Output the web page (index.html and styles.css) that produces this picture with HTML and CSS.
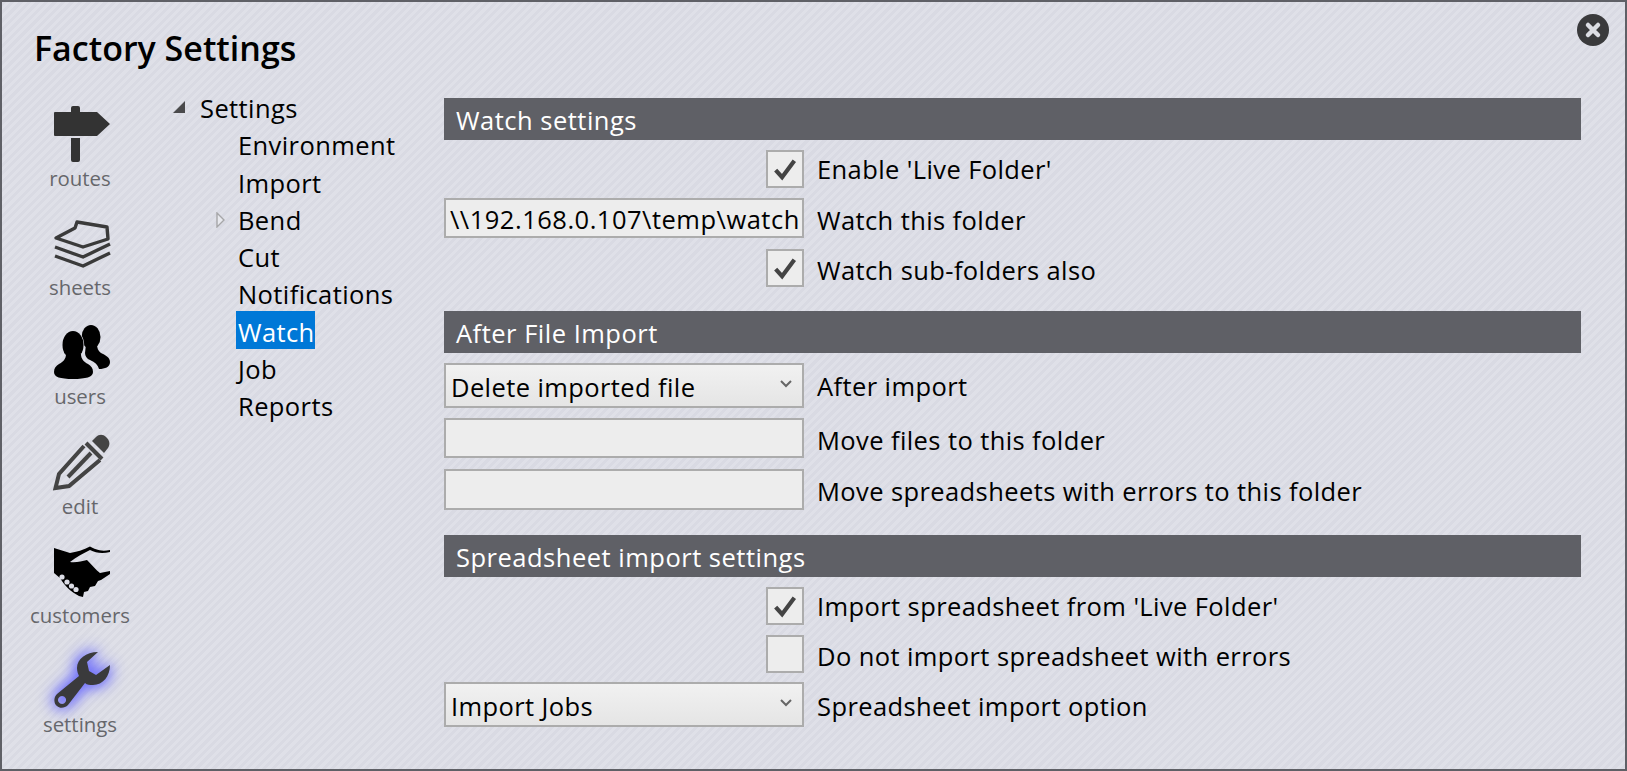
FILE: index.html
```html
<!DOCTYPE html>
<html lang="en">

<head>
    <meta charset="UTF-8">
    <title>Factory Settings</title>
    <link rel="stylesheet" href="styles.css">
</head>

<body>
    <div class="window">
        <button class="close-btn" aria-label="Close">
            <svg viewBox="0 0 32 32" width="32" height="32">
                <circle cx="16" cy="16" r="16" fill="#3a3a3c" />
                <path d="M11 11l10 10M21 11l-10 10" stroke="#dcdde3" stroke-width="4.5" stroke-linecap="round" />
            </svg>
        </button>

        <h1 class="title">Factory Settings</h1>

        <div class="content">
            <nav class="sidebar">
                <a class="nav-item">
                    <svg class="nav-icon" viewBox="0 0 56 56">
                        <path fill="#333" d="M17 2a2 2 0 0 1 2-2h5a2 2 0 0 1 2 2v4h17l13 12-13 12H1a1 1 0 0 1-1-1V7a1 1 0 0 1 1-1h16zM17 32h9v22a2 2 0 0 1-2 2h-5a2 2 0 0 1-2-2z" />
                    </svg>
                    <span class="nav-label">routes</span>
                </a>
                <a class="nav-item">
                    <svg class="nav-icon" viewBox="0 0 56 56">
                        <g fill="none" stroke="#3a3a3a" stroke-width="3.4" stroke-linejoin="round">
                            <path d="M23 7l-2 6L2 23l27 9 25-8-1-12z" />
                            <path d="M1 32l28 10 27-13" />
                            <path d="M1 41l28 10 27-13" />
                        </g>
                    </svg>
                    <span class="nav-label">sheets</span>
                </a>
                <a class="nav-item">
                    <svg class="nav-icon" viewBox="0 0 56 56">
                        <ellipse cx="37" cy="13" rx="9.500" ry="12" fill="#000" />
                        <path fill="#000" d="M32 20h11c0 4 1 7 4 9 4 2 9 4 9 9 0 5-5 7-11 7-1-4-4-7-9-9-3-1-5-4-5-7z" />
                        <g fill="#000" stroke="#dcdde6" stroke-width="1.400" paint-order="stroke">
                            <ellipse cx="19" cy="21" rx="10.500" ry="14" />
                            <path d="M12 30c0 5-3 8-7 10-3 2-5 4-5 8 0 5 6 7 19 7s20-2 20-7c0-4-2-6-5-8-4-2-7-5-7-10z" />
                        </g>
                        <ellipse cx="19" cy="24" rx="9.500" ry="11" fill="#000" />
                    </svg>
                    <span class="nav-label">users</span>
                </a>
                <a class="nav-item">
                    <svg class="nav-icon" viewBox="0 0 56 56">
                        <path fill="#444" d="M38 7l4-4c3-3 7-3 10 0l1 1c3 3 3 7 1 10l-4 5z" />
                        <path fill="none" stroke="#444" stroke-width="4" d="M32 9l16 16" />
                        <path fill="none" stroke="#444" stroke-width="4" d="M30 12L5 40 1.500 54 15 52l31-26" />
                        <path fill="none" stroke="#444" stroke-width="4" d="M14 43l23-24" />
                    </svg>
                    <span class="nav-label">edit</span>
                </a>
                <a class="nav-item">
                    <svg class="nav-icon" viewBox="0 0 56 56">
                        <path fill="#000" d="M0 5l16 5c6-1 14-3 20-6.500 5 2.500 10 5.500 20 3.500v2c-8 2-14 1-20-2-6 3-14 7-20 12 6 1 12-1 17-2 5 5 9 10 13 13l10-2v3l-9 6-3 1-3 5-5 1-2 4-4 1-1 5-4-1C17 49 10 42 6 35l-6-5z" />
                        <g fill="#dcdde6">
                            <circle cx="8" cy="34" r="2.600" />
                            <circle cx="13" cy="39" r="2.600" />
                            <circle cx="17.500" cy="43" r="2.600" />
                            <circle cx="22" cy="46.500" r="2.600" />
                        </g>
                    </svg>
                    <span class="nav-label">customers</span>
                </a>
                <a class="nav-item active">
                    <svg class="nav-icon" viewBox="0 0 56 56">
                        <path fill="#3a3a3c" fill-rule="evenodd" d="M44 0C32 0 23 7 23 16c0 3 1 6 2 8L3 42c-4 4-3 10 0 12 3 3 8 2 11-1l17-22c2 2 5 2 8 2 10 0 17-9 17-20L42 23l-7-4-2-9zM8 44a4 4 0 1 0 0.100 0z" />
                    </svg>
                    <span class="nav-label">settings</span>
                </a>
            </nav>

            <ul class="tree">
                <li class="tree-row root">
                    <span class="arrow-open"></span>Settings
                </li>
                <li class="tree-row">Environment</li>
                <li class="tree-row">Import</li>
                <li class="tree-row">
                    <svg class="arrow-closed" viewBox="0 0 9 16"><path d="M1 1l7 7-7 7z" /></svg>Bend
                </li>
                <li class="tree-row">Cut</li>
                <li class="tree-row">Notifications</li>
                <li class="tree-row"><span class="selected">Watch</span></li>
                <li class="tree-row">Job</li>
                <li class="tree-row">Reports</li>
            </ul>

            <main class="panel">
                <section class="group">
                    <h2 class="group-title">Watch settings</h2>
                    <div class="field">
                        <span class="checkbox"><svg viewBox="0 0 24 24"><path d="M4 13l5.500 6L20 5" /></svg></span>
                        <label>Enable 'Live Folder'</label>
                    </div>
                    <div class="field">
                        <input class="text-input" type="text" value="\\192.168.0.107\temp\watch">
                        <label class="label-low">Watch this folder</label>
                    </div>
                    <div class="field field-loose">
                        <span class="checkbox"><svg viewBox="0 0 24 24"><path d="M4 13l5.500 6L20 5" /></svg></span>
                        <label class="label-low">Watch sub-folders also</label>
                    </div>
                </section>

                <section class="group group-after">
                    <h2 class="group-title">After File Import</h2>
                    <div class="field">
                        <div class="select">Delete imported file<svg viewBox="0 0 12 8"><path d="M1 1l5 5 5-5" /></svg></div>
                        <label>After import</label>
                    </div>
                    <div class="field">
                        <input class="text-input" type="text">
                        <label class="label-low">Move files to this folder</label>
                    </div>
                    <div class="field field-loose">
                        <input class="text-input tall" type="text">
                        <label class="label-low">Move spreadsheets with errors to this folder</label>
                    </div>
                </section>

                <section class="group group-import">
                    <h2 class="group-title">Spreadsheet import settings</h2>
                    <div class="field">
                        <span class="checkbox"><svg viewBox="0 0 24 24"><path d="M4 13l5.500 6L20 5" /></svg></span>
                        <label>Import spreadsheet from 'Live Folder'</label>
                    </div>
                    <div class="field">
                        <span class="checkbox"></span>
                        <label class="label-low">Do not import spreadsheet with errors</label>
                    </div>
                    <div class="field field-tight">
                        <div class="select">Import Jobs<svg viewBox="0 0 12 8"><path d="M1 1l5 5 5-5" /></svg></div>
                        <label class="label-low">Spreadsheet import option</label>
                    </div>
                </section>
            </main>
        </div>
    </div>
</body>

</html>
```

FILE: styles.css
```css
html,
body {
    margin: 0;
    height: 100%;
}

body {
    font-family: 'Open Sans', 'Noto Sans', sans-serif;
    font-size: 25.5px;
    letter-spacing: 0.4px;
    color: #000;
}

.window {
    position: relative;
    box-sizing: border-box;
    width: 1627px;
    height: 771px;
    border: 2px solid #5f6066;
    background-color: #dcdde6;
    background-image: repeating-linear-gradient(135deg, #d9dae3 0, #d9dae3 3px, #dfe0e8 3px, #dfe0e8 6px);
    overflow: hidden;
}

.close-btn {
    position: absolute;
    top: 12px;
    right: 16px;
    width: 32px;
    height: 32px;
    padding: 0;
    border: none;
    background: none;
}

.title {
    margin: 0;
    padding: 24px 0 0 32px;
    font-size: 34px;
    line-height: 44px;
    font-weight: 600;
    letter-spacing: 0;
}

.content {
    display: flex;
    padding-top: 20px;
}

.sidebar {
    width: 156px;
    flex-shrink: 0;
    display: flex;
    flex-direction: column;
    padding-top: 16px;
    letter-spacing: 0;
}

.nav-item {
    height: 109.2px;
    display: flex;
    flex-direction: column;
    align-items: center;
}

.nav-icon {
    width: 56px;
    height: 56px;
    flex-shrink: 0;
    margin-left: 4px;
    overflow: visible;
}

.nav-label {
    margin-top: 1px;
    font-size: 20.4px;
    line-height: 30px;
    color: #66676b;
}

.active .nav-icon {
    filter: drop-shadow(0 0 7px #6c6cfa) drop-shadow(0 0 7px #8080f8);
}

.tree {
    width: 286px;
    flex-shrink: 0;
    margin: 0;
    padding: 0;
    list-style: none;
}

.tree-row {
    position: relative;
    height: 37.25px;
    line-height: 37px;
    padding-left: 80px;
    white-space: nowrap;
}

.tree-row.root {
    padding-left: 42px;
}

.arrow-open {
    position: absolute;
    left: 15px;
    top: 11px;
    width: 0;
    height: 0;
    border-left: 12px solid transparent;
    border-bottom: 12px solid #4a4a4c;
}

.arrow-closed {
    position: absolute;
    left: 58px;
    top: 10px;
    width: 9px;
    height: 16px;
    fill: #e8e9ee;
    stroke: #a6a6a8;
    stroke-width: 1.4;
}

.selected {
    display: inline-block;
    vertical-align: top;
    height: 38px;
    line-height: 43px;
    margin: -3px 0 0 -2px;
    padding: 0 0 0 2px;
    background-color: #0078d7;
    color: #fff;
}

.panel {
    width: 1137px;
    padding-top: 8px;
}

.group-title {
    margin: 0;
    height: 42px;
    line-height: 44px;
    padding-left: 12px;
    background-color: #5f6066;
    color: #fff;
    font-size: 25.5px;
    font-weight: 400;
    letter-spacing: 0.5px;
}

.group-after {
    margin-top: 24px;
}

.group-import {
    margin-top: 25px;
}

.field {
    display: grid;
    grid-template-columns: 360px 1fr;
    column-gap: 13px;
    align-items: center;
    margin-top: 10px;
}

.field-loose {
    margin-top: 11px;
}

.field-tight {
    margin-top: 9px;
}

.label-low {
    padding-top: 3px;
}

.checkbox {
    box-sizing: border-box;
    justify-self: end;
    width: 38px;
    height: 38px;
    border: 2px solid #acacac;
    background-color: #ededed;
    display: flex;
    align-items: center;
    justify-content: center;
}

.checkbox svg {
    width: 28px;
    height: 28px;
    fill: none;
    stroke: #444;
    stroke-width: 3.6;
}

.text-input {
    box-sizing: border-box;
    width: 360px;
    height: 40px;
    margin: 0;
    padding: 2px 4px 0;
    border: 2px solid #acacac;
    border-radius: 0;
    background-color: #ededed;
    font: inherit;
    letter-spacing: 0.5px;
    color: #000;
    outline: none;
}

.text-input.tall {
    height: 41px;
}

.select {
    box-sizing: border-box;
    height: 45px;
    line-height: 44px;
    padding: 0 5px;
    border: 2px solid #acacac;
    background-image: linear-gradient(#f1f1f1, #e5e5e5);
    position: relative;
}

.select svg {
    position: absolute;
    right: 10px;
    top: 15px;
    width: 12px;
    height: 8px;
    fill: none;
    stroke: #666;
    stroke-width: 2;
}
```
